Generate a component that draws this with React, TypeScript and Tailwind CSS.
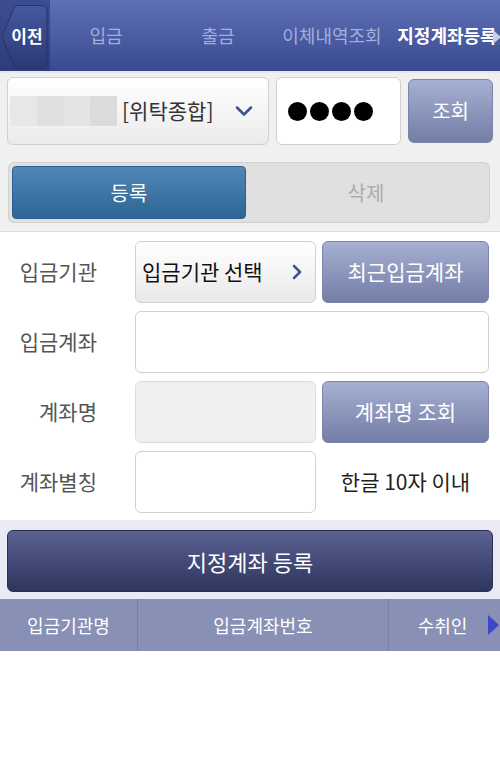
import { ChevronDown, ChevronRight } from 'lucide-react'

const tabs = [
  { label: '입금', w: 'w-[112px]' },
  { label: '출금', w: 'w-[112px]' },
  { label: '이체내역조회', w: 'w-[116px]' },
]

const font = { fontFamily: '"Noto Sans CJK KR", "Noto Sans", sans-serif' }

function Header() {
  return (
    <header className="flex h-[73px] border-b-2 border-[#e4e6ee] bg-gradient-to-b from-[#5f70b6] to-[#3a4a92]">
      <div className="relative flex w-[50px] items-center justify-center bg-gradient-to-b from-[#3d4d90] to-[#2e3c7b]">
        <svg className="absolute left-[1px] top-[5px]" width="47" height="64" viewBox="0 0 47 64">
          <defs>
            <linearGradient id="prev" x1="0" y1="0" x2="0" y2="1">
              <stop offset="0" stopColor="#4558a0" />
              <stop offset="1" stopColor="#2b3873" />
            </linearGradient>
          </defs>
          <path d="M14 0.5 H40 Q46 0.5 46 6.5 V57.5 Q46 63.5 40 63.5 H14 L1 32 Z" fill="url(#prev)" stroke="#27336b" strokeWidth="1" />
        </svg>
        <span className="relative ml-[4px] text-[17px] font-bold text-white">이전</span>
      </div>
      {tabs.map((t) => (
        <div key={t.label} className={`${t.w} flex items-center justify-center text-[18px] text-[#a3aedb]`}>{t.label}</div>
      ))}
      <div className="relative flex flex-1 items-center justify-center pl-[4px] text-[18px] font-bold text-white">
        지정계좌등록
        <span className="absolute right-[-1px] top-[30px] h-0 w-0 border-y-[7px] border-l-[8px] border-y-transparent border-l-[#c9cee6]" />
      </div>
    </header>
  )
}

function GreyButton({ children, className }: { children: React.ReactNode; className: string }) {
  return (
    <button className={`flex items-center justify-center rounded-[6px] border border-[#7b84ab] bg-gradient-to-b from-[#a6b0d2] to-[#747ea6] text-[21px] text-white ${className}`}>
      {children}
    </button>
  )
}

export default function App() {
  return (
    <div className="min-h-[766px] w-[500px] bg-white" style={font}>
      <Header />

      <section className="border-b border-[#dcdcdc] bg-[#f0f0f0] px-[7px] pb-[8px] pt-[4px]">
        <div className="flex h-[68px] gap-[7px]">
          <div className="flex w-[263px] items-center rounded-[6px] border border-[#cfcfcf] bg-gradient-to-b from-white to-[#ebebeb] pl-[2px]">
            <div className="grid h-[30px] w-[107px] grid-cols-4 opacity-90">
              <span className="bg-[#e6e6e6]" />
              <span className="bg-[#dedede]" />
              <span className="bg-[#e3e3e3]" />
              <span className="bg-[#d9d9d9]" />
            </div>
            <span className="ml-[5px] text-[21px] text-[#333]">[위탁종합]</span>
            <ChevronDown className="ml-auto mr-[10px] text-[#3f5491]" size={28} strokeWidth={2.2} />
          </div>
          <div className="flex w-[125px] items-center gap-[3px] rounded-[6px] border border-[#cfcfcf] bg-white pl-[11px]">
            <span className="h-[19px] w-[19px] rounded-full bg-black" />
            <span className="h-[19px] w-[19px] rounded-full bg-black" />
            <span className="h-[19px] w-[19px] rounded-full bg-black" />
            <span className="h-[19px] w-[19px] rounded-full bg-black" />
          </div>
          <GreyButton className="w-[85px] my-[2px] !text-[20px]">조회</GreyButton>
        </div>

        <div className="ml-[1px] mt-[17px] flex h-[61px] w-[482px] rounded-[6px] border border-[#d2d2d2] bg-[#e0e0e0] p-[3px]">
          <button className="flex w-[234px] items-center justify-center rounded-[4px] border border-[#2d5f8c] bg-gradient-to-b from-[#5087b7] to-[#2d6594] text-[20px] text-white">등록</button>
          <button className="flex flex-1 items-center justify-center text-[20px] text-[#acacac]">삭제</button>
        </div>
      </section>

      <section className="flex flex-col gap-[8px] bg-white pb-[7px] pl-[7px] pr-[11px] pt-[9px] text-[21px]">
        <div className="flex h-[62px] items-center">
          <span className="w-[90px] text-right text-[#555]">입금기관</span>
          <div className="ml-[38px] flex h-full w-[181px] items-center rounded-[6px] border border-[#d0d0d0] bg-gradient-to-b from-white to-[#e9e9e9] pl-[6px] text-[#111]">
            입금기관 선택
            <ChevronRight className="ml-auto mr-[6px] text-[#3f5491]" size={24} strokeWidth={2.5} />
          </div>
          <GreyButton className="ml-[6px] h-full flex-1">최근입금계좌</GreyButton>
        </div>
        <div className="flex h-[62px] items-center">
          <span className="w-[90px] text-right text-[#555]">입금계좌</span>
          <div className="ml-[38px] h-full flex-1 rounded-[6px] border border-[#d0d0d0] bg-white" />
        </div>
        <div className="flex h-[62px] items-center">
          <span className="w-[90px] text-right text-[#555]">계좌명</span>
          <div className="ml-[38px] h-full w-[181px] rounded-[6px] border border-[#dcdcdc] bg-[#f0f0f0]" />
          <GreyButton className="ml-[6px] h-full flex-1">계좌명 조회</GreyButton>
        </div>
        <div className="flex h-[62px] items-center">
          <span className="w-[90px] text-right text-[#555]">계좌별칭</span>
          <div className="ml-[38px] h-full w-[181px] rounded-[6px] border border-[#d0d0d0] bg-white" />
          <span className="ml-[6px] flex-1 text-center text-[21px] text-[#222]">한글 10자 이내</span>
        </div>
      </section>

      <section className="bg-[#e9eaf3] px-[7px] pb-[7px] pt-[10px]">
        <button className="flex h-[62px] w-full items-center justify-center rounded-[6px] border border-[#2a2f55] bg-gradient-to-b from-[#5b6293] to-[#2f355e] text-[22px] text-white">지정계좌 등록</button>
      </section>

      <div className="flex h-[52px] bg-[#8890b5] text-[18px] text-white">
        <div className="flex w-[138px] items-center justify-center border-r border-[#7880a6]">입금기관명</div>
        <div className="flex w-[251px] items-center justify-center border-r border-[#7880a6]">입금계좌번호</div>
        <div className="relative flex flex-1 items-center justify-center pr-[4px]">
          수취인
          <span className="absolute right-[1px] top-[16px] h-0 w-0 border-y-[10px] border-l-[11px] border-y-transparent border-l-[#3d47c9]" />
        </div>
      </div>
    </div>
  )
}
